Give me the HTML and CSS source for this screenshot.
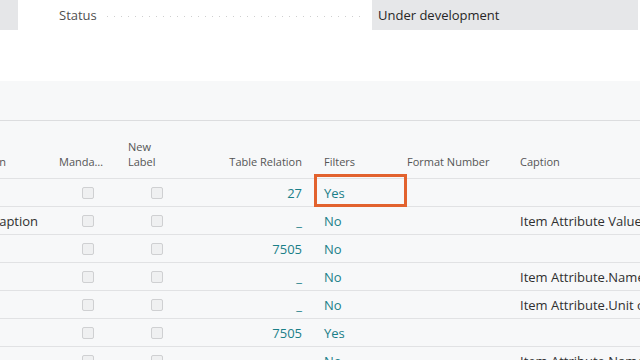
FILE: index.html
```html
<!DOCTYPE html>
<html lang="en">
  <head>
    <meta charset="UTF-8" />
    <meta name="viewport" content="width=device-width, initial-scale=1.0" />
    <title>Item Attribute Fields</title>
    <link rel="stylesheet" href="styles.css">
  </head>
  <body>
    <div class="field-row">
      <div class="side-tab"></div>
      <div class="field-label">Status</div>
      <div class="dots"></div>
      <div class="field-value">Under development</div>
    </div>

    <div class="list">
      <div class="toolbar"></div>

      <div class="row head">
        <div class="cell name"><span>Description</span></div>
        <div class="cell mand"><span>Mandatory</span></div>
        <div class="cell newlabel">New<br />Label</div>
        <div class="cell rel">Table Relation</div>
        <div class="cell filt">Filters</div>
        <div class="cell fmt">Format Number</div>
        <div class="cell cap">Caption</div>
      </div>

      <div class="row">
        <div class="cell name"></div>
        <div class="cell box"><span class="check"></span></div>
        <div class="cell box"><span class="check"></span></div>
        <div class="cell rel link">27</div>
        <div class="cell filt link">Yes<span class="marker"></span></div>
        <div class="cell fmt"></div>
        <div class="cell cap"></div>
      </div>

      <div class="row">
        <div class="cell name"><span>Caption</span></div>
        <div class="cell box"><span class="check"></span></div>
        <div class="cell box"><span class="check"></span></div>
        <div class="cell rel link">_</div>
        <div class="cell filt link">No</div>
        <div class="cell fmt"></div>
        <div class="cell cap">Item Attribute Value.Value</div>
      </div>

      <div class="row">
        <div class="cell name"></div>
        <div class="cell box"><span class="check"></span></div>
        <div class="cell box"><span class="check"></span></div>
        <div class="cell rel link">7505</div>
        <div class="cell filt link">No</div>
        <div class="cell fmt"></div>
        <div class="cell cap"></div>
      </div>

      <div class="row">
        <div class="cell name"></div>
        <div class="cell box"><span class="check"></span></div>
        <div class="cell box"><span class="check"></span></div>
        <div class="cell rel link">_</div>
        <div class="cell filt link">No</div>
        <div class="cell fmt"></div>
        <div class="cell cap">Item Attribute.Name</div>
      </div>

      <div class="row">
        <div class="cell name"></div>
        <div class="cell box"><span class="check"></span></div>
        <div class="cell box"><span class="check"></span></div>
        <div class="cell rel link">_</div>
        <div class="cell filt link">No</div>
        <div class="cell fmt"></div>
        <div class="cell cap">Item Attribute.Unit of Measure</div>
      </div>

      <div class="row">
        <div class="cell name"></div>
        <div class="cell box"><span class="check"></span></div>
        <div class="cell box"><span class="check"></span></div>
        <div class="cell rel link">7505</div>
        <div class="cell filt link">Yes</div>
        <div class="cell fmt"></div>
        <div class="cell cap"></div>
      </div>

      <div class="row">
        <div class="cell name"></div>
        <div class="cell box"><span class="check"></span></div>
        <div class="cell box"><span class="check"></span></div>
        <div class="cell rel link">_</div>
        <div class="cell filt link">No</div>
        <div class="cell fmt"></div>
        <div class="cell cap">Item Attribute.Name</div>
      </div>
    </div>
  </body>
</html>
```

FILE: styles.css
```css
html,
body {
  margin: 0;
  padding: 0;
  height: 100%;
  overflow: hidden;
}

body {
  font-family: "Open Sans", Lato, sans-serif;
  font-size: 13px;
  color: #303030;
  background-color: #fff;
}

.field-row {
  display: flex;
  align-items: center;
  height: 30px;
}

.side-tab {
  width: 18px;
  height: 30px;
  background-color: #e5e6e8;
}

.field-label {
  margin-left: 41px;
  color: #505050;
}

.dots {
  flex: 1;
  height: 1px;
  margin: 2px 7px 0 10px;
  background-image: linear-gradient(to right, #cfcfcf 1px, transparent 1px);
  background-size: 7px 1px;
  background-repeat: repeat-x;
}

.field-value {
  width: 260px;
  height: 30px;
  line-height: 30px;
  padding-left: 6px;
  margin-right: 2px;
  background-color: #e6e7e9;
  color: #262626;
}

.list {
  margin-top: 51px;
  height: 279px;
  background-color: #f7f8f9;
  overflow: hidden;
}

.toolbar {
  height: 39px;
  border-bottom: 1px solid #dcdddf;
}

.row {
  display: grid;
  grid-template-columns: 55px 65px 73px 123px 83px 113px 240px;
  height: 27px;
  border-bottom: 1px solid #e1e2e4;
  align-items: center;
}

.row.head {
  height: 57px;
  align-items: end;
  font-size: 11px;
  line-height: 15px;
  color: #555;
}

.cell {
  white-space: nowrap;
  min-width: 0;
}

.head .cell {
  padding-bottom: 9px;
}

.name {
  display: flex;
}

.name span {
  margin-left: -9px;
}

.head .name {
  justify-content: flex-end;
  padding-right: 49px;
}

.head .name span {
  margin-left: 0;
}

.mand span {
  display: block;
  width: 46px;
  margin-left: 4px;
  overflow: hidden;
  text-overflow: ellipsis;
}

.newlabel {
  padding-left: 8px;
}

.box {
  display: flex;
  justify-content: center;
}

.check {
  width: 10px;
  height: 10px;
  border: 1px solid #cfd0d2;
  border-radius: 2px;
  background-color: #eff0f1;
}

.rel {
  text-align: right;
  padding-right: 14px;
}

.filt,
.fmt,
.cap {
  padding-left: 8px;
}

.cap {
  overflow: hidden;
}

.link {
  color: #1a7f88;
}

.filt {
  position: relative;
  height: 100%;
  display: flex;
  align-items: center;
}

.head .filt {
  display: block;
  height: auto;
}

/* highlight drawn around the first Filters value */
.marker {
  position: absolute;
  left: -2px;
  top: -5px;
  width: 93px;
  height: 33px;
  box-sizing: border-box;
  border: 3px solid #e2622e;
}
```
